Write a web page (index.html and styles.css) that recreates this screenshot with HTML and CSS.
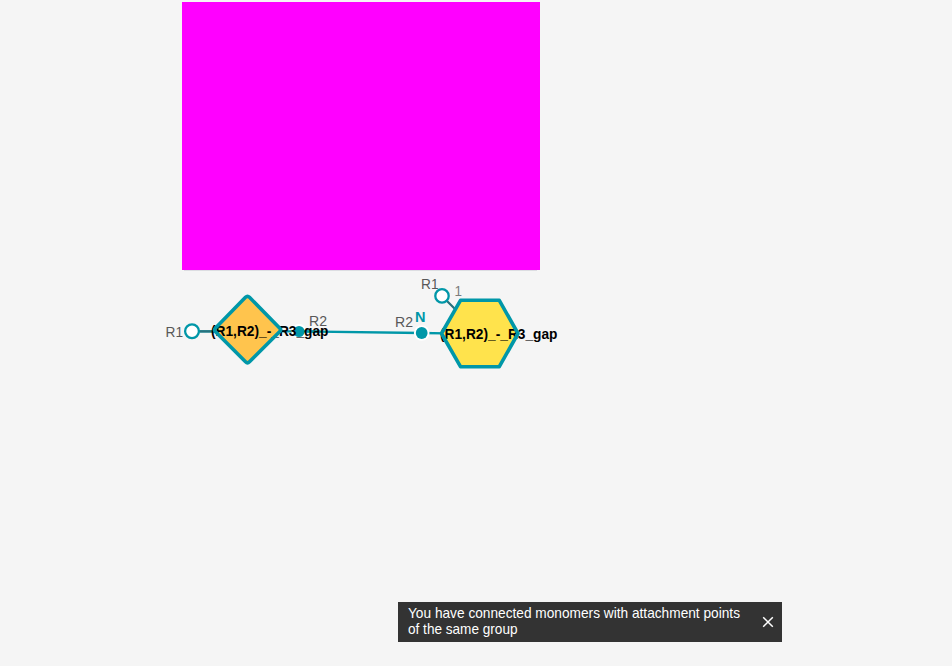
FILE: index.html
```html
<!DOCTYPE html>
<html lang="en">
<head>
<meta charset="utf-8">
<title>Macromolecule canvas</title>
<link rel="stylesheet" href="styles.css">
</head>
<body>
<main class="editor">
  <svg class="canvas" width="952" height="666" viewBox="0 0 952 666">
    <path class="bond" d="M192 331.3H220M280 331.3H299L421.500 333L446 333.300"/>
    <path class="stub" d="M200 331.300H214M447 301L459 313"/>

    <path class="chem" d="M215.300 331.300Q213.800 330 215.300 328.300L245.500 297.300Q247.500 295.300 249.500 297.300L279.800 328.300Q281.300 330 279.800 331.500L249.500 361.800Q247.500 363.800 245.500 361.800Z"/>
    <path class="peptide" d="M460.500 300.300H499.300L518 333.500L499.300 366.700H460.500L441.500 333.500Z"/>

    <circle class="halo" cx="299" cy="331.500" r="7.500"/>
    <circle class="used" cx="299" cy="331.500" r="5.500"/>
    <path class="bond" d="M304 331.400L320 331.600"/>
    <circle class="halo" cx="421.700" cy="333" r="7.800"/>
    <circle class="used" cx="421.700" cy="333" r="5.900"/>
    <circle class="free" cx="192" cy="331.200" r="6.900"/>
    <circle class="free" cx="442" cy="295.900" r="6.700"/>

    <text class="name" x="211" y="336" textLength="117.500" lengthAdjust="spacingAndGlyphs">(R1,R2)_-_R3_gap</text>
    <text class="name" x="440" y="339" textLength="117.500" lengthAdjust="spacingAndGlyphs">(R1,R2)_-_R3_gap</text>
    <path class="outline" d="M215.300 331.500Q213.800 330 215.300 328.300L245.500 297.300Q247.500 295.300 249.500 297.300L279.800 328.300Q281.300 330 279.800 331.500L249.500 361.800Q247.500 363.800 245.500 361.800Z"/>
    <path class="outline" d="M460.500 300.300H499.300L518 333.500L499.300 366.700H460.500L441.500 333.500Z"/>

    <text class="label" x="165.500" y="337" textLength="17.500" lengthAdjust="spacingAndGlyphs">R1</text>
    <text class="label" x="309" y="326" textLength="18" lengthAdjust="spacingAndGlyphs">R2</text>
    <text class="label" x="395" y="327" textLength="18" lengthAdjust="spacingAndGlyphs">R2</text>
    <text class="label" x="421" y="289" textLength="17.500" lengthAdjust="spacingAndGlyphs">R1</text>
    <text class="index" x="454.500" y="296" textLength="7.500" lengthAdjust="spacingAndGlyphs">1</text>
    <text class="terminal" x="415" y="322" textLength="10.500" lengthAdjust="spacingAndGlyphs">N</text>
  </svg>
  <div class="preview"></div>
  <aside class="toast">
    <svg class="message" width="350" height="40">
      <text x="10" y="16" textLength="332" lengthAdjust="spacingAndGlyphs">You have connected monomers with attachment points</text>
      <text x="10" y="32" textLength="109.500" lengthAdjust="spacingAndGlyphs">of the same group</text>
    </svg>
    <svg class="close" width="12" height="12" viewBox="0 0 12 12"><path d="M1.200 1.200L10.800 10.800M10.800 1.200L1.200 10.800"/></svg>
  </aside>
</main>
</body>
</html>
```

FILE: styles.css
```css
body {
  margin: 0;
  background: #f5f5f5;
  font-family: "Liberation Sans", Arial, sans-serif;
}
.editor {
  position: relative;
  width: 952px;
  height: 666px;
  overflow: hidden;
}
.canvas { display: block; }
.bond { fill: none; stroke: #0097a8; stroke-width: 2.3; }
.stub { fill: none; stroke: #28717d; stroke-width: 2.2; }
.chem { fill: #ffc44d; }
.peptide { fill: #ffe34c; }
.outline {
  fill: none;
  stroke: #0097a8;
  stroke-width: 3.6;
  stroke-linejoin: round;
}
.halo { fill: #fff; }
.used { fill: #0097a8; }
.free { fill: #fff; stroke: #0097a8; stroke-width: 2.3; }
.name { font-size: 15px; font-weight: 700; fill: #000; }
.label { font-size: 15.5px; fill: #585858; }
.index { font-size: 15px; fill: #7c7c7c; }
.terminal { font-size: 15px; font-weight: 700; fill: #0097a8; }
.preview {
  position: absolute;
  left: 182px;
  top: 2px;
  width: 358px;
  height: 268px;
  background: #f0f;
}
.preview::after {
  content: "";
  position: absolute;
  left: 2px;
  right: 3px;
  top: 100%;
  height: 1px;
  background: #dcdde1;
}
.toast {
  position: absolute;
  left: 398px;
  top: 602px;
  width: 384px;
  height: 40px;
  box-sizing: border-box;
  padding-right: 8px;
  display: flex;
  align-items: center;
  justify-content: space-between;
  background: #333;
}
.message { font-size: 15px; fill: #fff; }
.close { fill: none; stroke: #fff; stroke-width: 1.5; }
```
